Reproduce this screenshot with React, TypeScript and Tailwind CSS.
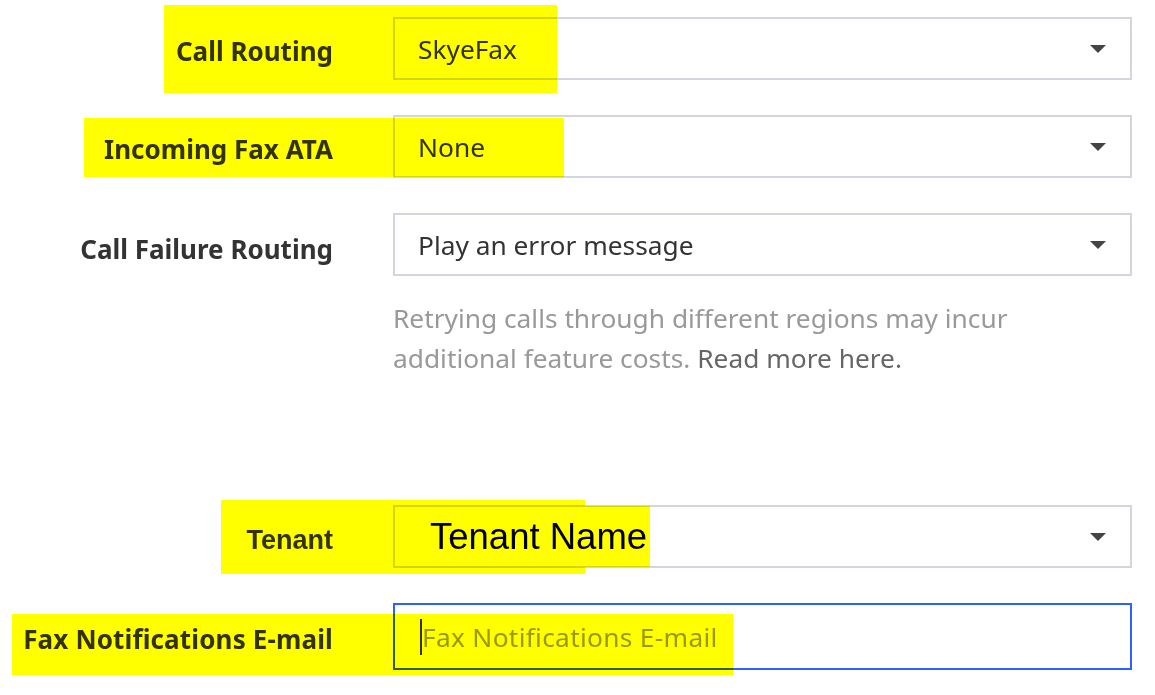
import React from 'react';

const Caret: React.FC = () => (
  <svg width="16" height="8" viewBox="0 0 16 8" className="shrink-0">
    <polygon points="0,0 16,0 8,8" fill="#444444" />
  </svg>
);

const Label: React.FC<{ children: React.ReactNode; className?: string }> = ({ children, className }) => (
  <div className={`w-[333px] shrink-0 text-right font-bold text-[26px] text-[#333333] pt-[5px] ${className ?? ''}`}>
    {children}
  </div>
);

const Select: React.FC<{ value: string }> = ({ value }) => (
  <div className="w-[739px] h-[63px] border-2 border-[#d3d6de] flex items-center justify-between pl-[23px] pr-[24px] text-[26.3px] text-[#333333]">
    <span className="pt-[3px]">{value}</span>
    <Caret />
  </div>
);

const App: React.FC = () => {
  return (
    <div className="relative w-[1155px] h-[695px] bg-white overflow-hidden font-['Noto_Sans',sans-serif]">
      <div className="flex flex-col pt-[17px]">
        {/* Call Routing */}
        <div className="flex items-center gap-[60px]">
          <Label>Call Routing</Label>
          <Select value="SkyeFax" />
        </div>

        {/* Incoming Fax ATA */}
        <div className="flex items-center gap-[60px] mt-[35px]">
          <Label>Incoming Fax ATA</Label>
          <Select value="None" />
        </div>

        {/* Call Failure Routing */}
        <div className="flex items-start gap-[60px] mt-[35px]">
          <Label className="leading-[63px]">Call Failure Routing</Label>
          <div className="flex flex-col">
            <Select value="Play an error message" />
            <p className="mt-[22px] w-[739px] text-[26.3px] leading-[40px] text-[#999999]">
              Retrying calls through different regions may incur
              <br />
              additional feature costs. <span className="text-[#666666]">Read more here.</span>
            </p>
          </div>
        </div>

        {/* Tenant */}
        <div className="flex items-center gap-[60px] mt-[127px]">
          <div className="w-[333px] shrink-0 text-right font-bold text-[27px] text-[#333333] font-['Liberation_Sans',sans-serif] pt-[7px]">
            Tenant
          </div>
          <div className="w-[739px] h-[63px] border-2 border-[#d3d6de] flex items-center justify-between pl-[35px] pr-[24px]">
            <span className="text-[36.5px] text-black font-['Liberation_Sans',sans-serif] pt-[1px]">Tenant Name</span>
            <Caret />
          </div>
        </div>

        {/* Fax Notifications E-mail */}
        <div className="flex items-center gap-[60px] mt-[35px]">
          <Label className="tracking-[0.15px]">Fax Notifications E-mail</Label>
          <div className="w-[739px] h-[67px] border-2 border-[#2e62ff] flex items-center pl-[25px] text-[26.3px] tracking-[0.3px] text-[#999999]">
            <span className="w-[2px] h-[36px] bg-[#333333]" />
            <span className="pt-[3px]">Fax Notifications E-mail</span>
          </div>
        </div>
      </div>

      {/* highlight annotations */}
      <div className="absolute left-[164px] top-[5px] w-[393px] h-[88px] bg-[#ffff00] mix-blend-multiply pointer-events-none" />
      <div className="absolute left-[84px] top-[118px] w-[480px] h-[59px] bg-[#ffff00] mix-blend-multiply pointer-events-none" />
      <div className="absolute left-[221px] top-[500px] w-[364px] h-[74px] bg-[#ffff00] mix-blend-multiply pointer-events-none" />
      <div className="absolute left-[393px] top-[506px] w-[257px] h-[61px] bg-[#ffff00] mix-blend-multiply pointer-events-none" />
      <div className="absolute left-[12px] top-[614px] w-[721px] h-[61px] bg-[#ffff00] mix-blend-multiply pointer-events-none" />
    </div>
  );
};

export default App;
